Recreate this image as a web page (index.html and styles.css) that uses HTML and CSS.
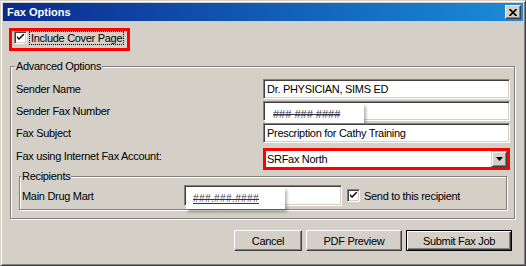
FILE: index.html
```html
<!DOCTYPE html>
<html lang="en">
<head>
    <meta charset="UTF-8">
    <title>Fax Options</title>
    <link rel="stylesheet" href="styles.css">
</head>
<body>
    <div class="window">
        <div class="titlebar">
            <span class="title">Fax Options</span>
            <span class="close-btn">
                <svg width="8" height="7" viewBox="0 0 8 7"><path d="M0.5 0 L7.5 7 M7.5 0 L0.5 7" stroke="#000" stroke-width="1.7"/></svg>
            </span>
        </div>
        <div class="content">
            <label class="cover-box">
                <span class="check"><svg width="7" height="7" viewBox="0 0 7 7"><path d="M0 2 L0 4 L2 6 L7 1 L7 -1 L2 4 Z" fill="#000"/></svg></span>
                <span class="focus-text">Include Cover Page</span>
            </label>

            <fieldset class="group advanced">
                <legend>Advanced Options</legend>
                <div class="form-row">
                    <span class="form-label">Sender Name</span>
                    <div class="field">Dr. PHYSICIAN, SIMS ED</div>
                </div>
                <div class="form-row">
                    <span class="form-label">Sender Fax Number</span>
                    <div class="field">
                        <div class="mask mask-fax"><span class="hash">###&nbsp;###&nbsp;####</span></div>
                    </div>
                </div>
                <div class="form-row">
                    <span class="form-label">Fax Subject</span>
                    <div class="field">Prescription for Cathy Training</div>
                </div>
                <div class="form-row select-row">
                    <span class="form-label">Fax using Internet Fax Account:</span>
                    <div class="combo">
                        <span class="combo-text">SRFax North</span>
                        <span class="combo-btn"><svg width="7" height="4" viewBox="0 0 7 4"><path d="M0 0 H7 L3.5 4 Z" fill="#000"/></svg></span>
                    </div>
                </div>

                <fieldset class="group recipients">
                    <legend>Recipients</legend>
                    <div class="recipient-row">
                        <span class="recipient-name">Main Drug Mart</span>
                        <div class="field recipient-field">
                            <div class="mask mask-recipient"><span class="hash underline">###.###.####</span></div>
                        </div>
                        <span class="check small-gap"><svg width="7" height="7" viewBox="0 0 7 7"><path d="M0 2 L0 4 L2 6 L7 1 L7 -1 L2 4 Z" fill="#000"/></svg></span>
                        <span class="check-text">Send to this recipient</span>
                    </div>
                </fieldset>
            </fieldset>

            <div class="buttons">
                <button class="btn btn-cancel">Cancel</button>
                <button class="btn btn-preview">PDF Preview</button>
                <button class="btn btn-submit">Submit Fax Job</button>
            </div>
        </div>
    </div>
</body>
</html>
```

FILE: styles.css
```css
:root {
    --face: #d4d0c8;
    --shadow: #808080;
    --dark: #404040;
    --light: #ffffff;
    --mark: #ff0000;
}

* {
    box-sizing: border-box;
}

body {
    margin: 0;
    background-color: var(--face);
    font-family: 'Liberation Sans', Arial, sans-serif;
    font-size: 11px;
    letter-spacing: -0.3px;
    color: #000;
    white-space: nowrap;
}

.window {
    width: 526px;
    height: 266px;
    display: flex;
    flex-direction: column;
    padding: 2px;
    background-color: var(--face);
    border: 1px solid;
    border-color: var(--face) var(--dark) var(--dark) var(--face);
    box-shadow: inset 1px 1px var(--light), inset -1px -1px var(--shadow);
}

.titlebar {
    height: 18px;
    display: flex;
    align-items: center;
    justify-content: space-between;
    padding: 0 2px 0 4px;
    background: linear-gradient(to right, #0a2a8e, #1a8cd8);
    color: #fff;
    font-weight: bold;
    letter-spacing: 0;
}

.close-btn {
    width: 16px;
    height: 14px;
    display: flex;
    align-items: center;
    justify-content: center;
    background-color: var(--face);
    border: 1px solid;
    border-color: var(--light) var(--dark) var(--dark) var(--light);
    box-shadow: inset -1px -1px var(--shadow);
}

.content {
    flex-grow: 1;
    display: flex;
    flex-direction: column;
    align-items: flex-start;
    padding: 7px 8px 0 6px;
}

.cover-box {
    width: 121px;
    height: 23px;
    display: flex;
    align-items: flex-start;
    border: 3px solid var(--mark);
}

.check {
    width: 13px;
    height: 13px;
    flex-shrink: 0;
    display: flex;
    align-items: center;
    justify-content: center;
    background-color: #fff;
    border: 1px solid;
    border-color: var(--shadow) var(--light) var(--light) var(--shadow);
    box-shadow: inset 1px 1px var(--dark), inset -1px -1px var(--face);
}

.cover-box .check {
    margin-left: 2px;
}

.focus-text {
    margin: 1px 0 0 3px;
    padding: 0 1px;
    line-height: 12px;
    outline: 1px dotted #000;
}

.group {
    margin: 0;
    padding: 0;
    border: 1px solid var(--shadow);
    box-shadow: 1px 1px 0 var(--light), inset 1px 1px 0 var(--light);
}

.group legend {
    padding: 0 1px;
    margin-left: -1px;
    line-height: 13px;
    background-color: var(--face);
}

.advanced {
    align-self: stretch;
    margin: 9px 0 0 1px;
    padding: 6px 4px 8px 5px;
}

.form-row {
    height: 20px;
    display: flex;
    align-items: center;
    margin-bottom: 2px;
}

.form-label {
    width: 247px;
    flex-shrink: 0;
}

.field {
    position: relative;
    flex-grow: 1;
    height: 20px;
    display: flex;
    align-items: center;
    padding-left: 3px;
    background-color: #fff;
    border: 1px solid;
    border-color: var(--shadow) var(--light) var(--light) var(--shadow);
    box-shadow: inset 1px 1px var(--dark), inset -1px -1px var(--face);
}

.select-row {
    height: 22px;
    margin-top: 5px;
    margin-bottom: 0;
    align-items: flex-start;
}

.select-row .form-label {
    margin-top: 2px;
}

.combo {
    flex-grow: 1;
    height: 22px;
    display: flex;
    align-items: center;
    justify-content: space-between;
    background-color: #fff;
    border: 3px solid var(--mark);
    padding-left: 1px;
}

.combo-btn {
    width: 16px;
    height: 16px;
    display: flex;
    align-items: center;
    justify-content: center;
    background-color: var(--face);
    border: 1px solid;
    border-color: var(--face) var(--dark) var(--dark) var(--face);
    box-shadow: inset 1px 1px var(--light), inset -1px -1px var(--shadow);
}

.recipients {
    margin: 0 3px;
    padding: 2px 2px 3px 2px;
}

.recipient-row {
    height: 21px;
    display: flex;
    align-items: center;
}

.recipient-name {
    width: 162px;
    flex-shrink: 0;
}

.recipient-field {
    flex-grow: 0;
    width: 158px;
    height: 21px;
}

.small-gap {
    margin-left: 5px;
}

.check-text {
    margin-left: 4px;
}

.mask {
    position: absolute;
    display: flex;
    align-items: center;
    background-color: #fff;
    box-shadow: 2px 3px 3px rgba(0, 0, 0, 0.3);
}

.mask-fax {
    left: 1px;
    top: 1px;
    width: 99px;
    height: 22px;
    padding-left: 8px;
}

.mask-recipient {
    left: 1px;
    top: 1px;
    width: 99px;
    height: 22px;
    padding-left: 7px;
}

.hash {
    color: #34344a;
    font-size: 11px;
    letter-spacing: 0;
    text-decoration: line-through;
}

.hash.underline {
    font-size: 10px;
    letter-spacing: 0.4px;
    text-decoration: line-through underline;
}

.buttons {
    align-self: stretch;
    display: flex;
    justify-content: flex-end;
    gap: 4px;
    margin-top: 11px;
    padding-right: 3px;
}

.btn {
    height: 21px;
    padding: 0;
    font-family: inherit;
    font-size: 11px;
    letter-spacing: -0.3px;
    color: #000;
    background-color: var(--face);
    border: 1px solid;
    border-color: var(--light) var(--dark) var(--dark) var(--light);
    box-shadow: inset -1px -1px var(--shadow);
}

.btn-cancel {
    width: 68px;
}

.btn-preview {
    width: 96px;
}

.btn-submit {
    width: 106px;
    border-color: #000;
    box-shadow: inset 1px 1px var(--light), inset -1px -1px var(--dark), inset -2px -2px var(--shadow);
}
```
